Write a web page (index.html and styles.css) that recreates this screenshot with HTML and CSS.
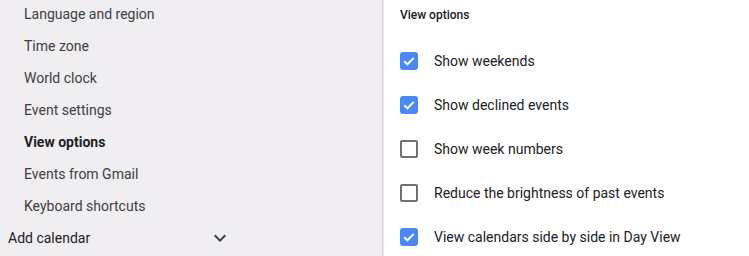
FILE: index.html
```html
<!DOCTYPE html>
<html>
<head>
<meta charset="utf-8">
<link rel="stylesheet" href="styles.css">
</head>
<body>
<div class="page">
  <nav class="sidebar">
    <ul class="nav-list">
      <li class="nav-item">Language and region</li>
      <li class="nav-item">Time zone</li>
      <li class="nav-item">World clock</li>
      <li class="nav-item">Event settings</li>
      <li class="nav-item active">View options</li>
      <li class="nav-item">Events from Gmail</li>
      <li class="nav-item">Keyboard shortcuts</li>
    </ul>
    <div class="section-row">
      <span>Add calendar</span>
      <svg class="chevron" viewBox="0 0 24 24" width="24" height="24"><path d="M7.41 8.59 12 13.17l4.59-4.58L18 10l-6 6-6-6z" fill="#3c4043"/></svg>
    </div>
  </nav>
  <main class="content">
    <h2 class="content-title">View options</h2>
    <ul class="options">
      <li class="option"><span class="box checked"><svg viewBox="0 0 18 18" width="18" height="18"><path d="M4.2 9.2l3.2 3.1 6.4-6.4" fill="none" stroke="#fff" stroke-width="2"/></svg></span>Show weekends</li>
      <li class="option"><span class="box checked"><svg viewBox="0 0 18 18" width="18" height="18"><path d="M4.2 9.2l3.2 3.1 6.4-6.4" fill="none" stroke="#fff" stroke-width="2"/></svg></span>Show declined events</li>
      <li class="option"><span class="box"></span>Show week numbers</li>
      <li class="option"><span class="box"></span>Reduce the brightness of past events</li>
      <li class="option"><span class="box checked"><svg viewBox="0 0 18 18" width="18" height="18"><path d="M4.2 9.2l3.2 3.1 6.4-6.4" fill="none" stroke="#fff" stroke-width="2"/></svg></span>View calendars side by side in Day View</li>
    </ul>
  </main>
</div>
</body>
</html>
```
FILE: styles.css
```css
html, body {
  margin: 0;
  padding: 0;
  height: 100%;
  overflow: hidden;
}
body {
  font-family: Roboto, "Liberation Sans", Arial, sans-serif;
  font-size: 14px;
  color: #3c4043;
  background: #fff;
}
.page {
  display: flex;
  height: 256px;
}
.sidebar {
  width: 382px;
  flex: none;
  background: #f0eef1;
  border-right: 1px solid #d8d6da;
  box-shadow: 1px 0 0 #ebe9ed;
}
.nav-list {
  list-style: none;
  margin: -2px 0 0;
  padding: 0;
}
.nav-item {
  height: 32px;
  line-height: 32px;
  padding-left: 24px;
  color: #3c4043;
}
.nav-item.active {
  font-weight: 700;
  color: #202124;
}
.section-row {
  display: flex;
  align-items: center;
  justify-content: space-between;
  width: 224px;
  height: 32px;
  padding-left: 8px;
  color: #202124;
}
.chevron {
  display: block;
}
.content {
  flex: 1;
  padding-left: 16px;
  margin-left: 1px;
}
.content-title {
  margin: 5px 0 14px;
  font-size: 12px;
  line-height: 20px;
  font-weight: 500;
  color: #202124;
}
.options {
  list-style: none;
  margin: 0;
  padding: 0;
}
.option {
  display: flex;
  align-items: center;
  gap: 16px;
  height: 44px;
  color: #202124;
}
.box {
  width: 18px;
  height: 18px;
  box-sizing: border-box;
  border: 2px solid #707070;
  border-radius: 2px;
  flex: none;
  display: flex;
  align-items: center;
  justify-content: center;
}
.box.checked {
  background: #4a89f3;
  border: none;
  border-radius: 3px;
}
.box svg {
  display: block;
}
```
